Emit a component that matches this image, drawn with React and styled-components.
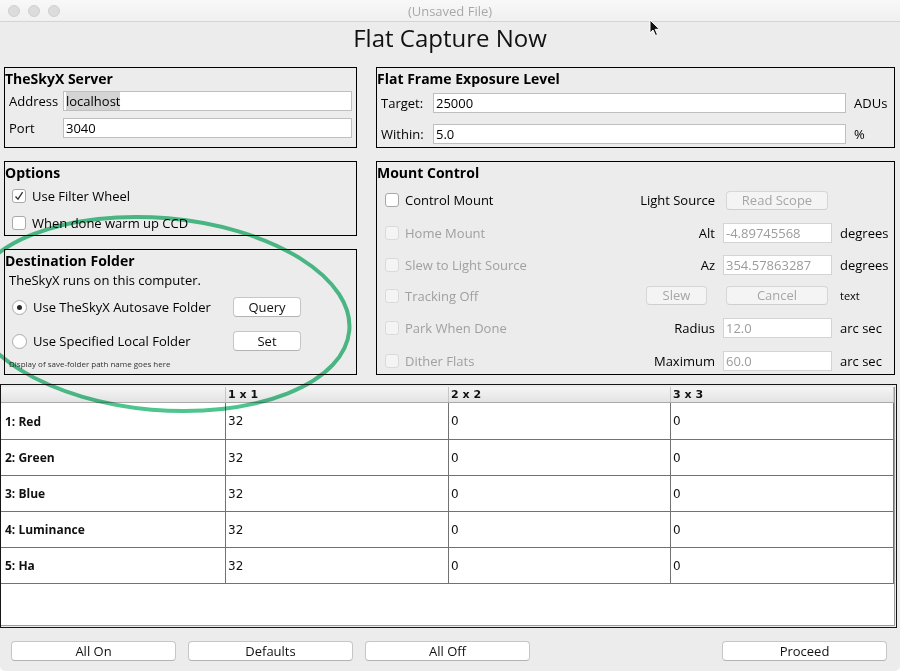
import React from "react";
import styled, { createGlobalStyle } from "styled-components";

const UI = `"Open Sans", "DejaVu Sans", sans-serif`;

const GlobalStyle = createGlobalStyle`
  html, body { margin: 0; padding: 0; background: #ffffff; }
  body { font-family: ${UI}; color: #000; }
  * { box-sizing: border-box; }
`;

const Window = styled.div`
  position: relative;
  width: 900px;
  height: 671px;
  background: #ececec;
  border-radius: 0 0 5px 5px;
  overflow: hidden;
  display: flex;
  flex-direction: column;
`;

const TitleBar = styled.div`
  flex: none;
  height: 22px;
  display: grid;
  grid-template-columns: 1fr auto 1fr;
  align-items: center;
  background: linear-gradient(#f8f8f8, #f0f0f0);
  border-bottom: 1px solid #d4d4d4;
`;

const Lights = styled.div`
  display: flex;
  gap: 8px;
  padding-left: 8px;
`;

const Light = styled.span`
  width: 12px;
  height: 12px;
  border-radius: 50%;
  background: #dcdcdc;
  border: 1px solid #d0d0d0;
`;

const WindowTitle = styled.div`
  font-size: 13px;
  color: #a8a8a8;
`;

const Heading = styled.h1`
  flex: none;
  margin: 0 0 13px;
  height: 32px;
  line-height: 32px;
  font-size: 24px;
  font-weight: 400;
  text-align: center;
  color: #111;
`;

const Columns = styled.div`
  flex: none;
  display: grid;
  grid-template-columns: 353px 519px;
  grid-template-rows: 81px 214px;
  column-gap: 19px;
  row-gap: 13px;
  padding-left: 4px;
`;

const Stack = styled.div`
  display: flex;
  flex-direction: column;
  gap: 13px;
`;

const Panel = styled.section`
  border: 1px solid #000;
  height: ${(p) => p.h}px;
  display: flex;
  flex-direction: column;
`;

const PanelTitle = styled.h2`
  margin: 0;
  padding-top: 1px;
  font-size: 14px;
  font-weight: 700;
  line-height: 20px;
  white-space: nowrap;
`;

const ServerGrid = styled.div`
  display: grid;
  grid-template-columns: 54px 1fr;
  row-gap: 7px;
  align-items: center;
  padding: 2px 4px 0 4px;
  font-size: 13px;
`;

const LevelGrid = styled.div`
  display: grid;
  grid-template-columns: 52px 1fr 44px;
  row-gap: 11px;
  align-items: center;
  padding: 4px 4px 0 4px;
  font-size: 13px;
`;

const Unit = styled.span`
  padding-left: ${(p) => (p.flush ? 0 : 8)}px;
  font-size: ${(p) => (p.small ? 11 : 13)}px;
  white-space: nowrap;
`;

const Field = styled.div`
  height: 20px;
  line-height: 18px;
  background: #fff;
  border: 1px solid ${(p) => (p.disabled ? "#d4d4d4" : "#bfbfbf")};
  padding-left: 2px;
  font-size: 13px;
  color: ${(p) => (p.disabled ? "#9c9c9c" : "#000")};
  white-space: nowrap;
  overflow: hidden;
`;

const Selection = styled.span`
  background: #d4d4d4;
`;

const CheckList = styled.div`
  display: flex;
  flex-direction: column;
  gap: 5px;
  padding: 2px 0 0 7px;
`;

const CheckRow = styled.label`
  display: flex;
  align-items: center;
  gap: 6px;
  height: 22px;
  font-size: 13px;
  color: ${(p) => (p.disabled ? "#a0a0a0" : "#000")};
  white-space: nowrap;
`;

const Box = styled.span`
  flex: none;
  width: 14px;
  height: 14px;
  border-radius: 3px;
  border: 1px solid ${(p) => (p.disabled ? "#dadada" : "#a9a9a9")};
  background: ${(p) => (p.disabled ? "#f4f4f4" : "#fff")};
  display: flex;
  align-items: center;
  justify-content: center;
`;

const RadioDot = styled.span`
  flex: none;
  width: 15px;
  height: 15px;
  border-radius: 50%;
  border: 1px solid #a9a9a9;
  background: #fff;
  display: flex;
  align-items: center;
  justify-content: center;
  &::after {
    content: "";
    width: 5px;
    height: 5px;
    border-radius: 50%;
    background: ${(p) => (p.on ? "#2a2a2a" : "transparent")};
  }
`;

const Note = styled.div`
  padding: 0 0 0 4px;
  margin-top: 1px;
  line-height: 16px;
  font-size: 13px;
`;

const RadioGrid = styled.div`
  display: grid;
  grid-template-columns: 221px 68px;
  grid-auto-rows: 34px;
  align-items: center;
  padding: 2px 0 0 7px;
`;

const Tiny = styled.div`
  padding-left: 4px;
  font-size: 8px;
  line-height: 12px;
  color: #333;
`;

const Button = styled.button`
  height: ${(p) => (p.tall ? 20 : 19)}px;
  width: ${(p) => (p.w ? `${p.w}px` : "auto")};
  margin: ${(p) => p.m || "0"};
  padding: 0;
  font-family: ${UI};
  font-size: 13px;
  line-height: 17px;
  color: ${(p) => (p.disabled ? "#a6a6a6" : "#111")};
  background: ${(p) => (p.disabled ? "#f4f4f4" : "#fff")};
  border: 1px solid ${(p) => (p.disabled ? "#d6d6d6" : "#c6c6c6")};
  border-bottom-color: ${(p) => (p.disabled ? "#cfcfcf" : "#b3b3b3")};
  border-radius: 4px;
`;

const MountGrid = styled.div`
  display: grid;
  grid-template-columns: 1fr 109px 50px;
  grid-template-rows: 34px 32px 31px 31px 34px 31px;
  column-gap: 8px;
  align-items: center;
  padding: 0 4px 0 8px;
  font-size: 13px;
`;

const MountLeft = styled.div`
  display: flex;
  align-items: center;
  justify-content: space-between;
`;

const SideLabel = styled.span`
  white-space: nowrap;
`;

const TableFrame = styled.div`
  flex: none;
  margin-top: 9px;
  width: 897px;
  height: 244px;
  border: 1px solid #151515;
  background: #ececec;
  padding: 2px 1px 1px 0;
`;

const Viewport = styled.div`
  height: 100%;
  background: #fff;
  border-right: 1px solid #9c9c9c;
  border-bottom: 1px solid #9c9c9c;
`;

const Row = styled.div`
  display: grid;
  grid-template-columns: 225px 223px 222px 223px;
  height: ${(p) => (p.head ? 16 : p.lead ? 37 : 36)}px;
  background: ${(p) => (p.head ? "linear-gradient(#f5f5f5, #e3e3e3)" : "#fff")};
  border-bottom: 1px solid ${(p) => (p.head ? "#a9a9a9" : "#727272")};
`;

const Cell = styled.div`
  display: flex;
  align-items: center;
  padding-left: ${(p) => (p.first ? 4 : 2)}px;
  border-right: 1px solid ${(p) => (p.head ? "#c6c6c6" : "#727272")};
  font-family: ${(p) => (p.bold && !p.head ? UI : `"DejaVu Sans", sans-serif`)};
  font-size: ${(p) => (p.head ? 11 : 12)}px;
  font-weight: ${(p) => (p.bold ? 700 : 400)};
  color: #111;
  white-space: nowrap;
`;

const Footer = styled.div`
  flex: none;
  display: flex;
  gap: 12px;
  padding: 13px 13px 0 11px;
`;

const Spacer = styled.div`
  flex: 1;
`;

const Overlay = styled.svg`
  position: absolute;
  left: 0;
  top: 0;
  pointer-events: none;
  mix-blend-mode: multiply;
`;

const Cursor = styled.svg`
  position: absolute;
  left: 649px;
  top: 19px;
  pointer-events: none;
`;

function Check({ checked, disabled }) {
  return (
    <Box disabled={disabled}>
      {checked && (
        <svg width="10" height="10" viewBox="0 0 10 10">
          <polyline points="1.5,5.5 4,8.2 8.6,1.2" fill="none" stroke="#333" strokeWidth="1.3" />
        </svg>
      )}
    </Box>
  );
}

const mountRows = [
  { label: "Control Mount", disabled: false, side: "Light Source", control: "button", value: "Read Scope" },
  { label: "Home Mount", disabled: true, side: "Alt", control: "field", value: "-4.89745568", unit: "degrees" },
  { label: "Slew to Light Source", disabled: true, side: "Az", control: "field", value: "354.57863287", unit: "degrees" },
  { label: "Tracking Off", disabled: true, side: "slew", control: "button", value: "Cancel", unit: "text", small: true },
  { label: "Park When Done", disabled: true, side: "Radius", control: "field", value: "12.0", unit: "arc sec" },
  { label: "Dither Flats", disabled: true, side: "Maximum", control: "field", value: "60.0", unit: "arc sec" },
];

const filters = ["1: Red", "2: Green", "3: Blue", "4: Luminance", "5: Ha"];

export default function App() {
  return (
    <>
      <GlobalStyle />
      <Window>
        <TitleBar>
          <Lights>
            <Light />
            <Light />
            <Light />
          </Lights>
          <WindowTitle>(Unsaved File)</WindowTitle>
          <div />
        </TitleBar>

        <Heading>Flat Capture Now</Heading>

        <Columns>
          <Panel h={81}>
            <PanelTitle>TheSkyX Server</PanelTitle>
            <ServerGrid>
              <span>Address</span>
              <Field>
                <Selection>localhost</Selection>
              </Field>
              <span>Port</span>
              <Field>3040</Field>
            </ServerGrid>
          </Panel>

          <Panel h={81}>
            <PanelTitle>Flat Frame Exposure Level</PanelTitle>
            <LevelGrid>
              <span>Target:</span>
              <Field>25000</Field>
              <Unit>ADUs</Unit>
              <span>Within:</span>
              <Field>5.0</Field>
              <Unit>%</Unit>
            </LevelGrid>
          </Panel>

          <Stack>
            <Panel h={75}>
              <PanelTitle>Options</PanelTitle>
              <CheckList>
                <CheckRow>
                  <Check checked />
                  Use Filter Wheel
                </CheckRow>
                <CheckRow>
                  <Check />
                  When done warm up CCD
                </CheckRow>
              </CheckList>
            </Panel>

            <Panel h={126}>
              <PanelTitle>Destination Folder</PanelTitle>
              <Note>TheSkyX runs on this computer.</Note>
              <RadioGrid>
                <CheckRow>
                  <RadioDot on />
                  Use TheSkyX Autosave Folder
                </CheckRow>
                <Button tall>Query</Button>
                <CheckRow>
                  <RadioDot />
                  Use Specified Local Folder
                </CheckRow>
                <Button tall>Set</Button>
              </RadioGrid>
              <Tiny>Display of save-folder path name goes here</Tiny>
            </Panel>
          </Stack>

          <Panel h={214}>
            <PanelTitle>Mount Control</PanelTitle>
            <MountGrid>
              {mountRows.map((r) => (
                <React.Fragment key={r.label}>
                  <MountLeft>
                    <CheckRow disabled={r.disabled}>
                      <Check disabled={r.disabled} />
                      {r.label}
                    </CheckRow>
                    {r.side === "slew" ? (
                      <Button disabled w={61} m="0 8px 0 0">
                        Slew
                      </Button>
                    ) : (
                      <SideLabel>{r.side}</SideLabel>
                    )}
                  </MountLeft>
                  {r.control === "button" ? (
                    <Button disabled m="0 4px 0 3px">
                      {r.value}
                    </Button>
                  ) : (
                    <Field disabled>{r.value}</Field>
                  )}
                  <Unit flush small={r.small}>
                    {r.unit || ""}
                  </Unit>
                </React.Fragment>
              ))}
            </MountGrid>
          </Panel>
        </Columns>

        <TableFrame>
          <Viewport>
            <Row head>
              <Cell head bold first />
              <Cell head bold>1 x 1</Cell>
              <Cell head bold>2 x 2</Cell>
              <Cell head bold>3 x 3</Cell>
            </Row>
            {filters.map((f, i) => (
              <Row key={f} lead={i === 0}>
                <Cell bold first>{f}</Cell>
                <Cell>32</Cell>
                <Cell>0</Cell>
                <Cell>0</Cell>
              </Row>
            ))}
          </Viewport>
        </TableFrame>

        <Footer>
          <Button tall w={165}>All On</Button>
          <Button tall w={165}>Defaults</Button>
          <Button tall w={165}>All Off</Button>
          <Spacer />
          <Button tall w={165}>Proceed</Button>
        </Footer>

        <Overlay width="900" height="671" viewBox="0 0 900 671">
          <ellipse
            cx="160"
            cy="314"
            rx="190"
            ry="96"
            transform="rotate(5 160 314)"
            fill="none"
            stroke="#4ec48e"
            strokeWidth="4"
          />
        </Overlay>

        <Cursor width="12" height="18" viewBox="0 0 12 18">
          <path d="M1 1 L1 14 L4 11 L6.5 16.5 L8.5 15.6 L6.2 10.3 L10.5 10.3 Z" fill="#111" stroke="#fff" strokeWidth="1" />
        </Cursor>
      </Window>
    </>
  );
}
